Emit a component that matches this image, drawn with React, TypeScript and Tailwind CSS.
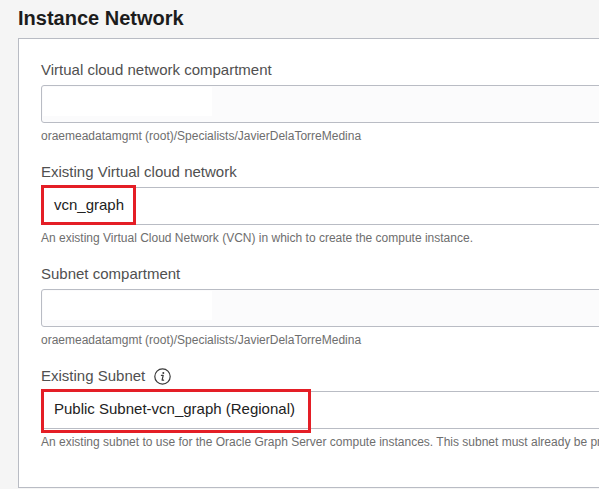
import React from 'react';

function InfoIcon() {
    return (
        <svg width="17" height="17" viewBox="0 0 17 17" className="ml-[9px]">
            <circle cx="8.5" cy="8.5" r="7.7" fill="none" stroke="#3a3a3a" strokeWidth="1.2" />
            <circle cx="9.3" cy="4.9" r="1" fill="#3a3a3a" />
            <path d="M7.4 7.3 H9.2 L8.1 12.2 H9.6" fill="none" stroke="#3a3a3a" strokeWidth="1.2" strokeLinecap="round" strokeLinejoin="round" />
        </svg>
    );
}

type FieldProps = {
    label: string;
    info?: boolean;
    value?: string;
    helper: string;
    disabled?: boolean;
    mark?: string;
};

function Field({ label, info, value, helper, disabled, mark }: FieldProps) {
    return (
        <div className="mb-[19px] last:mb-0">
            <div className="flex items-center h-[18px] text-[15px] leading-[18px] text-[#505050]">
                {label}
                {info && <InfoIcon />}
            </div>
            <div className="relative mt-[6px]">
                {disabled ? (
                    <div className="h-[38px] rounded-[3px] border border-[#b9bcc4] bg-[#fbfbfc] flex items-start p-[1px]">
                        <div className="w-[169px] h-[29px] bg-white" />
                    </div>
                ) : (
                    <div className="h-[38px] rounded-[3px] border border-[#b9bcc4] bg-white flex items-center pl-[12px] pb-[2px] text-[15px] text-[#222]">
                        {value}
                    </div>
                )}
                {mark && <div className={mark} />}
            </div>
            <div className="mt-[6px] h-[15px] text-[12px] leading-[15px] text-[#6e6e6e] whitespace-nowrap">{helper}</div>
        </div>
    );
}

export default function App() {
    const root = 'oraemeadatamgmt (root)/Specialists/JavierDelaTorreMedina';
    return (
        <div className="w-[599px] h-[489px] overflow-hidden bg-[#f5f5f5] font-['Liberation_Sans',Arial,sans-serif]">
            <h1 className="pt-[6px] pl-[18px] h-[30px] text-[20px] leading-[24px] font-bold text-[#1c1c1c]">
                Instance Network
            </h1>
            <div className="ml-[18px] mt-[8px] w-[720px] bg-white border border-r-0 border-[#b9bcc4] pt-[22px] pb-[37px] pl-[22px]">
                <Field label="Virtual cloud network compartment" helper={root} disabled />
                <Field
                    label="Existing Virtual cloud network"
                    value="vcn_graph"
                    helper="An existing Virtual Cloud Network (VCN) in which to create the compute instance."
                    mark="absolute left-0 top-[-2px] w-[95px] h-[40px] border-[3px] border-[#e41e26]"
                />
                <Field label="Subnet compartment" helper={root} disabled />
                <Field
                    label="Existing Subnet"
                    info
                    value="Public Subnet-vcn_graph (Regional)"
                    helper="An existing subnet to use for the Oracle Graph Server compute instances. This subnet must already be present in the chosen VCN."
                    mark="absolute left-0 top-[-2px] w-[270px] h-[44px] border-[3px] border-[#e41e26]"
                />
            </div>
        </div>
    );
}
